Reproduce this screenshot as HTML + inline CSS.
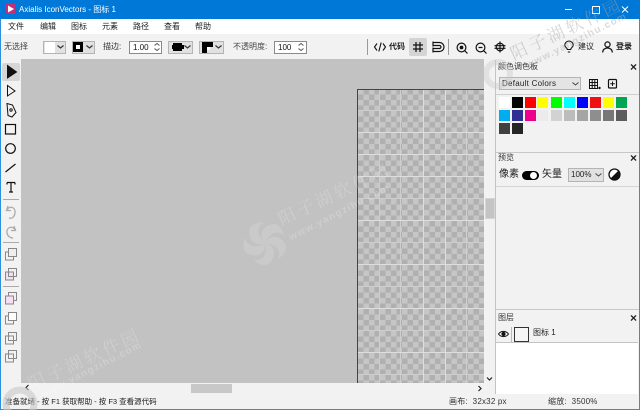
<!DOCTYPE html>
<html style="overflow:hidden;width:640px;height:410px"><head><meta charset="utf-8"><style>
html,body{margin:0;padding:0}
body{width:640px;height:410px;overflow:hidden;position:relative;background:#f2f2f2;font-family:"Liberation Sans","Noto Sans CJK SC",sans-serif;font-size:8px;color:#222}
.a{position:absolute}
.t{position:absolute;white-space:nowrap;line-height:12px}
svg{position:absolute;overflow:visible}
.dd{position:absolute;height:13px;background:#e1e1e1;border:1px solid #b4b4b4;box-sizing:border-box}
.sp{position:absolute;height:13px;background:#fff;border:1px solid #8a8a8a;box-sizing:border-box;font-size:8px;line-height:11px;padding-left:3px;color:#111}
.sw{position:absolute;width:11px;height:11px}
.wm{position:absolute;white-space:nowrap;line-height:20px;font-size:17px;letter-spacing:3.4px;color:rgba(255,255,255,.2);transform:rotate(-25deg);transform-origin:0 100%;font-family:"Noto Serif CJK SC","Liberation Serif",serif}
.wu{position:absolute;white-space:nowrap;line-height:12px;font-size:10px;letter-spacing:1.2px;color:rgba(255,255,255,.2);transform:rotate(-27deg);transform-origin:0 100%;font-weight:bold;font-family:"Liberation Sans",sans-serif}
.x{position:absolute;font-size:12px;font-weight:bold;line-height:12px;color:#222}
</style></head><body>
<!-- title bar -->
<div class="a" style="left:0;top:0;width:640px;height:19px;background:#0078d7"></div>
<div class="a" style="left:6px;top:4px;width:9px;height:10px;background:#c0307f"></div>
<svg style="left:6px;top:4px" width="9" height="10"><path d="M2 1.500L8 5L2 8.500Z" fill="#fff"/></svg>
<div class="t" style="left:19px;top:4px;color:#fff;font-size:8px">Axialis IconVectors - 图标 1</div>
<svg style="left:560px;top:0" width="80" height="19" fill="none" stroke="#fff"><path d="M5 9.500H12"/><rect x="32.500" y="6.500" width="7" height="7"/><path d="M62 6.500L68 12.500M68 6.500L62 12.500"/></svg>
<!-- menu -->
<div class="a" style="left:0;top:19px;width:640px;height:15px;background:#fff"></div>
<div class="t" style="left:8px;top:21px">文件</div>
<div class="t" style="left:40px;top:21px">编辑</div>
<div class="t" style="left:71px;top:21px">图标</div>
<div class="t" style="left:102px;top:21px">元素</div>
<div class="t" style="left:133px;top:21px">路径</div>
<div class="t" style="left:164px;top:21px">查看</div>
<div class="t" style="left:195px;top:21px">帮助</div>
<!-- toolbar -->
<div class="t" style="left:4px;top:41px;color:#444">无选择</div>
<div class="dd" style="left:43px;top:41px;width:23px"></div><div class="a" style="left:45px;top:42px;width:10px;height:11px;background:#fff"></div>
<svg style="left:57px;top:45px" width="7" height="4" fill="none" stroke="#333" stroke-width="1.200"><path d="M.5 .5L3.500 3L6.500 .5"/></svg>
<div class="dd" style="left:72px;top:41px;width:23px"></div><div class="a" style="left:73px;top:42px;width:4px;height:4px;border:3px solid #000;background:#fff"></div>
<svg style="left:86px;top:45px" width="7" height="4" fill="none" stroke="#333" stroke-width="1.200"><path d="M.5 .5L3.500 3L6.500 .5"/></svg>
<div class="t" style="left:103px;top:41px;color:#333">描边:</div>
<div class="sp" style="left:129px;top:41px;width:33px">1.00</div>
<svg style="left:152px;top:42px" width="10" height="10" fill="none" stroke="#555"><path d="M2.500 3.500L5 1.500L7.500 3.500M2.500 6.500L5 8.500L7.500 6.500"/></svg>
<div class="dd" style="left:168px;top:41px;width:25px"></div><div class="a" style="left:173px;top:43px;width:9px;height:8px;background:#000"></div><div class="a" style="left:172px;top:45px;width:12px;height:4px;background:#000"></div>
<svg style="left:184px;top:45px" width="7" height="4" fill="none" stroke="#333" stroke-width="1.200"><path d="M.5 .5L3.500 3L6.500 .5"/></svg>
<div class="dd" style="left:199px;top:41px;width:25px"></div><div class="a" style="left:202px;top:42px;width:11px;height:11px;background:#000"></div><div class="a" style="left:207px;top:47px;width:6px;height:6px;background:#e1e1e1"></div><div class="a" style="left:207px;top:47px;width:3px;height:3px;background:#fff"></div>
<svg style="left:215px;top:45px" width="7" height="4" fill="none" stroke="#333" stroke-width="1.200"><path d="M.5 .5L3.500 3L6.500 .5"/></svg>
<div class="t" style="left:233px;top:41px;color:#444">不透明度:</div>
<div class="sp" style="left:274px;top:41px;width:33px">100</div>
<svg style="left:296px;top:42px" width="10" height="10" fill="none" stroke="#555"><path d="M2.500 3.500L5 1.500L7.500 3.500M2.500 6.500L5 8.500L7.500 6.500"/></svg>
<div class="a" style="left:367px;top:39px;width:1px;height:16px;background:#999"></div>
<svg style="left:374px;top:41px" width="12" height="12" fill="none" stroke="#111" stroke-width="1.100"><path d="M3 2.500L.5 6L3 9.500M9 2.500L11.500 6L9 9.500M7.200 1.500L4.800 10.500"/></svg>
<div class="t" style="left:389px;top:41px;font-weight:bold">代码</div>
<div class="a" style="left:409px;top:38px;width:18px;height:18px;background:#d4d4d4;border-radius:2px"></div>
<svg style="left:413px;top:42px" width="10" height="10" fill="none" stroke="#111" stroke-width="1.200"><path d="M3 0V10M7 0V10M0 3H10M0 7H10"/></svg>
<svg style="left:432px;top:41px" width="12" height="12" fill="none" stroke="#111" stroke-width="1.200"><path d="M1 1.500H7.500A4.500 4.500 0 0 1 7.500 10.500H1M1 4.500H7.500A1.500 1.500 0 0 1 7.500 7.500H1M1 .5V5.500M1 6.500V11.500"/></svg>
<div class="a" style="left:448px;top:39px;width:1px;height:16px;background:#999"></div>
<svg style="left:456px;top:42px" width="12" height="12" fill="none" stroke="#111" stroke-width="1.200"><circle cx="5.500" cy="5.500" r="4.400"/><path d="M8.700 8.700L11.500 11.500"/><circle cx="5.500" cy="5.500" r="1.300" fill="#111"/></svg>
<svg style="left:475px;top:42px" width="12" height="12" fill="none" stroke="#111" stroke-width="1.200"><circle cx="5.500" cy="5.500" r="4.400"/><path d="M8.700 8.700L11.500 11.500M3.500 5.500H7.500"/></svg>
<svg style="left:494px;top:41px" width="12" height="12" fill="none" stroke="#111" stroke-width="1.200"><circle cx="6" cy="6" r="3.800"/><path d="M6 .5V11.500M.5 4.700H11.500M.5 7.300H11.500"/></svg>
<svg style="left:564px;top:41px" width="10" height="13" fill="none" stroke="#111" stroke-width="1.100"><path d="M3.300 8.500C3.300 7 .8 6 .8 4.200A4.200 4.200 0 0 1 9.200 4.200C9.200 6 6.700 7 6.700 8.500ZM3.800 11H6.200"/></svg>
<div class="t" style="left:578px;top:41px">建议</div>
<svg style="left:602px;top:41px" width="11" height="12" fill="none" stroke="#111" stroke-width="1.200"><circle cx="5.500" cy="3.500" r="2.600"/><path d="M.7 11.500C.7 8.500 3 7 5.500 7S10.300 8.500 10.300 11.500"/></svg>
<div class="t" style="left:616px;top:41px;font-weight:bold">登录</div>
<!-- left tools -->
<div class="a" style="left:0;top:19px;width:1px;height:391px;background:#2f8fdc"></div>
<div class="a" style="left:639px;top:19px;width:1px;height:391px;background:#2f8fdc"></div>
<div class="a" style="left:2px;top:63px;width:18px;height:18px;background:#d6d6d6;border-radius:2px"></div>
<svg style="left:0;top:60px" width="22" height="320" fill="none" stroke="#111" stroke-width="1">
<path d="M7.500 5.500V18L16.500 12Z" fill="#111"/>
<path d="M7.500 25.500V36L15 31Z"/>
<path d="M7 43.500L12.500 45L16 52.500L12 57L8 55.500Z"/><circle cx="11" cy="50" r="1.200"/>
<rect x="5.500" y="64.500" width="10" height="9.500" stroke-width="1.200"/>
<circle cx="10.500" cy="88.500" r="4.800" stroke-width="1.200"/>
<path d="M5.500 112L15.500 104" stroke-width="1.200"/>
<path d="M7 122.500H15M7 122.500V124.500M15 122.500V124.500M11 122.500V132M9 132H13" stroke-width="1.200"/>
<path d="M3 139.500H19" stroke="#aaa"/>
<path d="M8 146L6.500 150.500H11M6.500 150.500C9 145 16 147 15 153C14.500 157 11.500 159 9 158" stroke="#aaa" stroke-width="1.300"/>
<path d="M14 166L15.500 170.500H11M15.500 170.500C13 165 6 167 7 173C7.500 176 10 178 13 178" stroke="#aaa" stroke-width="1.300"/>
<path d="M3 182.500H19" stroke="#aaa"/>
<g stroke="#888"><rect x="5.500" y="192" width="8" height="8"/><rect x="8.500" y="188.500" width="8" height="8" fill="#eee"/><rect x="5.500" y="212" width="8" height="8" fill="#f2dff2"/><rect x="8.500" y="208.500" width="8" height="8"/></g>
<path d="M3 226.500H19" stroke="#aaa"/>
<g stroke="#888"><rect x="8.500" y="232.500" width="8" height="8"/><rect x="5.500" y="236" width="8" height="8" fill="#f5dff5"/><rect x="5.500" y="256" width="8" height="8" fill="#f2f2f2"/><rect x="8.500" y="252.500" width="8" height="8" fill="#fff"/><rect x="5.500" y="276" width="8" height="8"/><rect x="8.500" y="272.500" width="8" height="8"/><rect x="5.500" y="294" width="8" height="8"/><rect x="8.500" y="290.500" width="8" height="8"/></g>
</svg>
<!-- canvas -->
<div class="a" style="left:21px;top:59px;width:463px;height:324px;background:#c2c2c2;overflow:hidden">
  <div class="a" style="left:336.500px;top:30px;width:127px;height:294px;background-image:repeating-conic-gradient(#b0b0b0 0 25%,#c6c6c6 0 50%);background-size:11px 11px"></div>
  <svg style="left:336px;top:30px" width="127" height="294" fill="none">
   <g stroke="#cecece" stroke-width="1"><path d="M22.500 0V294M43.500 0V294M109.500 0V294M0 21.500H127M0 109.500H127M0 153.500H127M0 197.500H127M0 241.500H127M0 285.500H127"/></g>
   <g stroke="#dedede" stroke-width="1"><path d="M66.500 0V294M88.500 0V294M0 43.500H127M0 65.500H127M0 87.500H127M0 131.500H127M0 175.500H127M0 219.500H127M0 263.500H127"/></g>
   <path d="M.5 294V.5H127" stroke="#444" stroke-width="1"/>
  </svg>
</div>
<!-- scrollbars -->
<div class="a" style="left:485px;top:198px;width:10px;height:21px;background:#c4c4c4;border:1px solid #d5d5d5;box-sizing:border-box"></div>
<div class="a" style="left:191px;top:384px;width:41px;height:9px;background:#c8c8c8"></div>
<svg style="left:486px;top:376px" width="8" height="6" fill="none" stroke="#222" stroke-width="1.200"><path d="M1 1.500L3.500 4L6 1.500"/></svg>
<svg style="left:477px;top:385px" width="6" height="8" fill="none" stroke="#222" stroke-width="1.200"><path d="M1.500 1L4 3.500L1.500 6"/></svg>
<svg style="left:24px;top:384px" width="6" height="8" fill="none" stroke="#222" stroke-width="1.200"><path d="M4.500 1L2 3.500L4.500 6"/></svg>
<!-- right panel -->
<div class="a" style="left:495px;top:60px;width:1px;height:334px;background:#c4c4c4"></div>
<div class="t" style="left:498px;top:61px;color:#333">颜色调色板</div><div class="x" style="left:630px;top:61px">×</div>
<div class="dd" style="left:499px;top:77px;width:82px;height:13px;background:#e4e4e4;font-size:8px;line-height:11px;padding-left:2px;letter-spacing:.25px">Default Colors</div>
<svg style="left:572px;top:82px" width="7" height="4" fill="none" stroke="#444"><path d="M.5 .5L3.500 3L6.500 .5"/></svg>
<svg style="left:589px;top:79px" width="30" height="11" fill="none" stroke="#111"><path d="M.5 .5H8.500V9.500H.5ZM3.200 .5V9.500M5.800 .5V9.500M.5 3.500H8.500M.5 6.500H8.500" stroke-width="1"/><circle cx="10.500" cy="9" r=".7" fill="#111"/><rect x="19.500" y=".5" width="8" height="8.500" rx="1" stroke-width="1.200"/><path d="M23.500 2.500V7M21.200 4.800H25.800"/></svg>
<div class="a" style="left:496px;top:94px;width:143px;height:1px;background:#d0d0d0"></div>
<div class="sw" style="left:499px;top:97px;background:#fff"></div><div class="sw" style="left:512px;top:97px;background:#000"></div><div class="sw" style="left:525px;top:97px;background:#f00"></div><div class="sw" style="left:537px;top:97px;background:#ff0"></div><div class="sw" style="left:551px;top:97px;background:#0f0"></div><div class="sw" style="left:564px;top:97px;background:#0ff"></div><div class="sw" style="left:577px;top:97px;background:#00f"></div><div class="sw" style="left:590px;top:97px;background:#f01010"></div><div class="sw" style="left:603px;top:97px;background:#ff0"></div><div class="sw" style="left:616px;top:97px;background:#00a651"></div>
<div class="sw" style="left:499px;top:110px;background:#00aeef"></div><div class="sw" style="left:512px;top:110px;background:#2e3192"></div><div class="sw" style="left:525px;top:110px;background:#ec008c"></div><div class="sw" style="left:537px;top:110px;background:#ebebeb"></div><div class="sw" style="left:551px;top:110px;background:#d2d2d2"></div><div class="sw" style="left:564px;top:110px;background:#bcbcbc"></div><div class="sw" style="left:577px;top:110px;background:#a5a5a5"></div><div class="sw" style="left:590px;top:110px;background:#8e8e8e"></div><div class="sw" style="left:603px;top:110px;background:#777"></div><div class="sw" style="left:616px;top:110px;background:#5c5c5c"></div>
<div class="sw" style="left:499px;top:123px;background:#404040"></div><div class="sw" style="left:512px;top:123px;background:#252525"></div>
<div class="a" style="left:496px;top:152px;width:143px;height:1px;background:#c8c8c8"></div>
<div class="t" style="left:498px;top:152px;color:#333">预览</div><div class="x" style="left:630px;top:152px">×</div>
<div class="t" style="left:499px;top:169px;font-size:10px">像素</div>
<div class="a" style="left:522px;top:171px;width:17px;height:9px;background:#000;border-radius:5px"></div><div class="a" style="left:530px;top:172px;width:7px;height:7px;background:#fff;border-radius:50%"></div>
<div class="t" style="left:542px;top:169px;font-size:10px">矢量</div>
<div class="dd" style="left:568px;top:168px;width:36px;height:14px;line-height:12px;padding-left:2px;font-size:8px">100%</div>
<svg style="left:595px;top:173px" width="7" height="4" fill="none" stroke="#444"><path d="M.5 .5L3.500 3L6.500 .5"/></svg>
<svg style="left:608px;top:168px" width="13" height="13"><circle cx="6.500" cy="6.500" r="5.500" fill="#fff" stroke="#111" stroke-width="1.300"/><path d="M10.400 2.600A5.500 5.500 0 0 1 2.600 10.400Z" fill="#111"/></svg>
<div class="a" style="left:496px;top:186px;width:143px;height:1px;background:#d4d4d4"></div>
<div class="a" style="left:496px;top:309px;width:143px;height:1px;background:#c8c8c8"></div>
<div class="t" style="left:498px;top:312px;color:#333">图层</div><div class="x" style="left:630px;top:312px">×</div>
<svg style="left:498px;top:330px" width="11" height="8" fill="none" stroke="#111"><path d="M.5 4C3 .5 8 .5 10.500 4C8 7.500 3 7.500 .5 4Z"/><circle cx="5.500" cy="4" r="1.600" fill="#111"/></svg>
<div class="a" style="left:511px;top:327px;width:1px;height:15px;background:#bbb"></div>
<div class="a" style="left:514px;top:327px;width:15px;height:15px;box-sizing:border-box;border:1px solid #333;background:#f6f6f6"></div>
<div class="t" style="left:533px;top:327px">图标 1</div>
<div class="a" style="left:496px;top:342px;width:142px;height:52px;background:#fff;border-top:1px solid #c4c4c4;box-sizing:border-box"></div>
<!-- status bar -->
<div class="t" style="left:5px;top:396px;font-size:7.5px">准备就绪 - 按 F1 获取帮助 - 按 F3 查看源代码</div>
<div class="t" style="left:449px;top:396px;color:#333;letter-spacing:.2px">画布:&nbsp; 32x32 px</div>
<div class="t" style="left:548px;top:396px;color:#333;letter-spacing:.2px">缩放:&nbsp; 3500%</div>
<div class="a" style="left:0;top:409px;width:640px;height:1px;background:#2f8fdc"></div>
<!-- watermarks -->
<div class="wm" style="left:515px;top:43px;color:rgba(165,165,165,.45)">阳子湖软件园</div>
<div class="wu" style="left:530px;top:60px;color:rgba(175,175,175,.45)">www.yangzihu.com</div>
<div class="wm" style="left:283px;top:208px">阳子湖软件园</div>
<div class="wu" style="left:293px;top:232px">www.yangzihu.com</div>
<div class="wm" style="left:33px;top:373px">阳子湖软件园</div>
<div class="wu" style="left:45px;top:389px">www.yangzihu.com</div>
<svg style="left:244px;top:222px" width="42" height="42" fill="rgba(255,255,255,.14)"><g id="s"><path d="M21 21C14 14 18 3 30 2C36 3 39 8 40 14C34 7 25 11 21 21Z"/><path transform="rotate(72 21 21)" d="M21 21C14 14 18 3 30 2C36 3 39 8 40 14C34 7 25 11 21 21Z"/><path transform="rotate(144 21 21)" d="M21 21C14 14 18 3 30 2C36 3 39 8 40 14C34 7 25 11 21 21Z"/><path transform="rotate(216 21 21)" d="M21 21C14 14 18 3 30 2C36 3 39 8 40 14C34 7 25 11 21 21Z"/><path transform="rotate(288 21 21)" d="M21 21C14 14 18 3 30 2C36 3 39 8 40 14C34 7 25 11 21 21Z"/></g></svg>
<svg style="left:0;top:384px" width="40" height="40" fill="none" stroke="rgba(200,200,200,.6)" stroke-width="7"><circle cx="20" cy="20" r="14"/></svg>
<svg style="left:484px;top:56px" width="34" height="40" fill="none" stroke="rgba(200,200,200,.4)" stroke-width="6"><circle cx="14" cy="18" r="12"/></svg>
</body></html>
